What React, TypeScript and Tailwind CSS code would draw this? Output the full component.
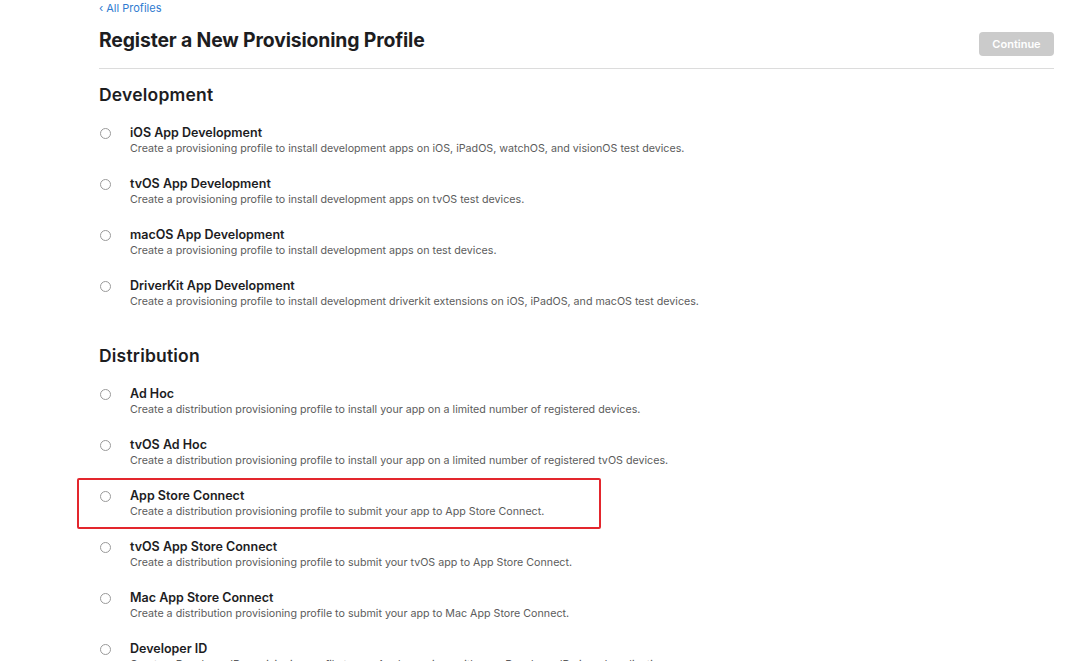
import React from 'react';

const development = [
  {
    title: 'iOS App Development',
    desc: 'Create a provisioning profile to install development apps on iOS, iPadOS, watchOS, and visionOS test devices.',
  },
  {
    title: 'tvOS App Development',
    desc: 'Create a provisioning profile to install development apps on tvOS test devices.',
  },
  {
    title: 'macOS App Development',
    desc: 'Create a provisioning profile to install development apps on test devices.',
  },
  {
    title: 'DriverKit App Development',
    desc: 'Create a provisioning profile to install development driverkit extensions on iOS, iPadOS, and macOS test devices.',
  },
];

const distribution = [
  {
    title: 'Ad Hoc',
    desc: 'Create a distribution provisioning profile to install your app on a limited number of registered devices.',
  },
  {
    title: 'tvOS Ad Hoc',
    desc: 'Create a distribution provisioning profile to install your app on a limited number of registered tvOS devices.',
  },
  {
    title: 'App Store Connect',
    desc: 'Create a distribution provisioning profile to submit your app to App Store Connect.',
    marked: true,
  },
  {
    title: 'tvOS App Store Connect',
    desc: 'Create a distribution provisioning profile to submit your tvOS app to App Store Connect.',
  },
  {
    title: 'Mac App Store Connect',
    desc: 'Create a distribution provisioning profile to submit your app to Mac App Store Connect.',
  },
  {
    title: 'Developer ID',
    desc: 'Create a Developer ID provisioning profile to use Apple services with your Developer ID signed applications.',
  },
];

type Item = { title: string; desc: string; marked?: boolean };

const Option = ({ item }: { item: Item }) => (
  <label className="relative flex items-start">
    <span className="mt-[3px] ml-px w-[11px] h-[11px] rounded-full border border-[#9a9a9a] bg-white shrink-0" />
    <span className="ml-[19px] flex flex-col">
      <span className="text-[12.5px] leading-[16px] font-semibold text-[#1d1d1f]">{item.title}</span>
      <span className="text-[10.7px] leading-[15px] text-[#5c5c5c]">{item.desc}</span>
    </span>
    {item.marked && (
      <span className="absolute -left-[22px] -top-[10px] w-[524px] h-[51px] border-2 border-[#e3262d] rounded-[2px]" />
    )}
  </label>
);

const Section = ({ title, items }: { title: string; items: Item[] }) => (
  <div className="flex flex-col">
    <h2 className="text-[17.5px] leading-[22px] font-semibold text-[#1d1d1f] tracking-[0.2px]">{title}</h2>
    <div className="mt-[19px] flex flex-col gap-[20px]">
      {items.map((it) => (
        <Option key={it.title} item={it} />
      ))}
    </div>
  </div>
);

export default function App() {
  return (
    <div
      className="w-[1080px] h-[661px] overflow-hidden bg-white"
      style={{ fontFamily: 'Inter, "Noto Sans", sans-serif' }}
    >
      <div className="ml-[99px] w-[955px] flex flex-col">
        <a className="text-[11px] leading-[16px] text-[#2f7bd0] flex items-center gap-[3px]">
          <span className="text-[11px]">‹</span>
          <span>All Profiles</span>
        </a>
        <div className="flex items-start justify-between">
          <h1 className="mt-[12px] text-[19.4px] leading-[24px] font-bold text-[#1d1d1f] tracking-[-0.15px]">
            Register a New Provisioning Profile
          </h1>
          <button className="mt-[16px] w-[75px] h-[24px] rounded-[4px] bg-[#cbcbcb] text-white text-[11px] font-semibold">
            Continue
          </button>
        </div>
        <div className="mt-[12px] h-px bg-[#dcdcdc]" />
        <div className="mt-[15px]">
          <Section title="Development" items={development} />
        </div>
        <div className="mt-[36px]">
          <Section title="Distribution" items={distribution} />
        </div>
      </div>
    </div>
  );
}
